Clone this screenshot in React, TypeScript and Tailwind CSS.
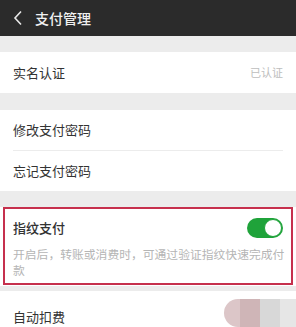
import React from "react";

const font = { fontFamily: '"Noto Sans CJK SC", "Noto Sans", sans-serif' };

export default function App() {
  return (
    <div className="relative w-[296px] h-[327px] overflow-hidden bg-[#ececec]" style={font}>
      <div className="h-[36px] bg-[#2b2b2b] flex items-center pl-[13px]">
        <svg width="10" height="16" viewBox="0 0 10 16" className="mr-[12px]">
          <path d="M8 1.5 L2 8 L8 14.5" fill="none" stroke="#e8e8e8" strokeWidth="1.6" />
        </svg>
        <span className="text-[14px] text-[#f0f0f0] font-medium leading-none">支付管理</span>
      </div>

      <div className="h-[16px]" />
      <div className="h-[41px] bg-white flex items-center justify-between pl-[13px] pr-[13px]">
        <span className="text-[13px] text-[#333]">实名认证</span>
        <span className="text-[11px] text-[#bdbdbd]">已认证</span>
      </div>

      <div className="h-[17px]" />
      <div className="bg-white">
        <div className="h-[40px] flex items-center pl-[13px]">
          <span className="text-[13px] text-[#333]">修改支付密码</span>
        </div>
        <div className="mx-[13px] h-px bg-[#ececec]" />
        <div className="h-[40px] flex items-center pl-[13px]">
          <span className="text-[13px] text-[#333]">忘记支付密码</span>
        </div>
      </div>

      <div className="h-[16px]" />
      <div className="bg-white px-[3px] h-[79px]">
        <div className="h-[78px] border-2 border-[#c6304d] pl-[8px] pr-[4px]">
          <div className="h-[37px] flex items-center justify-between pr-[4px]">
            <span className="text-[13px] text-[#333] font-medium">指纹支付</span>
            <div className="w-[36px] h-[20px] rounded-full bg-[#1fa33a] relative">
              <div className="absolute right-[1px] top-[1px] w-[18px] h-[18px] rounded-full bg-white border border-[#1fa33a]" />
            </div>
          </div>
          <div className="w-[272px] text-[11.8px] leading-[16px] text-[#b5b5b5]">
            开启后，转账或消费时，可通过验证指纹快速完成付款
          </div>
        </div>
      </div>

      <div className="h-[5px]" />
      <div className="h-[37px] bg-white pl-[13px] pt-[18px]">
        <div className="text-[13px] leading-[16px] text-[#333]">自动扣费</div>
      </div>

      <div className="absolute left-[224px] top-[299px] w-[72px] h-[28px] flex overflow-hidden rounded-l-[14px]">
        <div className="w-[16px] bg-[#dcc6c8]" />
        <div className="w-[20px] bg-[#cfb5b7]" />
        <div className="w-[20px] bg-[#d8d8d8]" />
        <div className="w-[16px] bg-[#e6e6e6]" />
      </div>
    </div>
  );
}
